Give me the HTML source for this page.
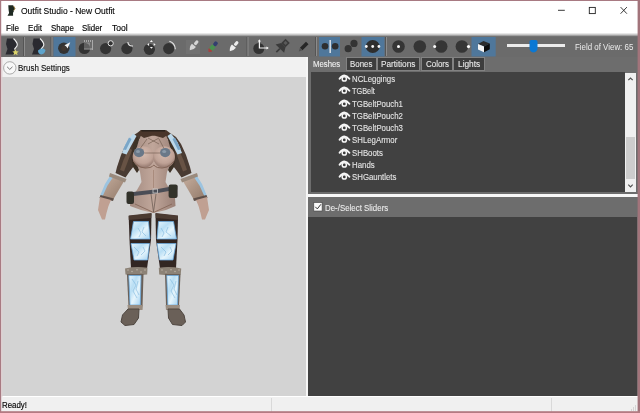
<!DOCTYPE html>
<html><head><meta charset="utf-8">
<style>
*{margin:0;padding:0;box-sizing:border-box}
html,body{width:640px;height:413px;overflow:hidden;background:#fff;font-family:"Liberation Sans",sans-serif;}
.a{position:absolute}
.t{position:absolute;white-space:nowrap;transform-origin:0 0}
#toolbar{left:1px;top:36px;width:637px;height:20.8px;background:#6b6b6b}
#left{left:1px;top:76.6px;width:304.5px;height:319.9px;background:#d3d3d3}
#lhead{left:1px;top:57.2px;width:307px;height:19.4px;background:#f1f1f1}
#split{left:305.5px;top:57px;width:2.7px;height:339px;background:#f6f6f6}
#right{left:308.2px;top:57px;width:329.8px;height:339px;background:#6d6d6d}
#mesh{left:310.5px;top:72px;width:314.5px;height:120px;background:#414141}
#sb{left:624.8px;top:72.6px;width:11.6px;height:119.4px;background:#f0f0f0}
#hsplit{left:308.2px;top:194.2px;width:329.8px;height:2.8px;background:#f8f8f8}
#shead{left:308.2px;top:197px;width:328px;height:19.5px;background:#6d6d6d}
#sarea{left:308.2px;top:216.5px;width:329px;height:179.5px;background:#414141}
#status{left:1px;top:396.5px;width:637px;height:15.5px;background:#f0f0f0}
.tab{position:absolute;top:57.3px;height:13.4px;background:#3d3d3d;border:1px solid #828282}
.m{font-size:9px;line-height:9px;color:#000;-webkit-text-stroke:0.15px #000}
.tb{font-size:8.5px;line-height:8.5px;color:#e8e8e8;-webkit-text-stroke:0.1px #e8e8e8}
.it{font-size:9.8px;line-height:9.8px;color:#e6e6e6;-webkit-text-stroke:0.1px #e6e6e6;transform:scaleX(0.8)}
#frame{left:0;top:0;width:640px;height:413px;border:1px solid #c08088;border-right-width:2px}
</style></head><body>
<div class="a" id="toolbar"></div>
<div class="a" id="left"></div>
<div class="a" id="lhead"></div>
<div class="a" id="split"></div>
<div class="a" id="right"></div>
<div class="tab" style="left:345.6px;width:31.2px"></div>
<div class="tab" style="left:377.2px;width:43px"></div>
<div class="tab" style="left:420.6px;width:32.2px"></div>
<div class="tab" style="left:453.2px;width:31.4px"></div>
<div class="a" id="mesh"></div>
<div class="a" id="sb"></div>
<div class="a" style="left:626.3px;top:137px;width:9px;height:42px;background:#cdcdcd"></div>
<div class="a" id="hsplit"></div>
<div class="a" id="shead"></div>
<div class="a" id="sarea"></div>
<div class="a" id="status"></div>
<div class="a" style="left:271px;top:398px;width:1px;height:14px;background:#d9d9d9"></div>
<div class="a" style="left:551px;top:398px;width:1px;height:14px;background:#d9d9d9"></div>

<!-- text -->
<div class="t" style="left:20.9px;top:6.1px;font-size:9.5px;line-height:9.5px;color:#000;-webkit-text-stroke:0.12px #000;transform:scaleX(0.892)">Outfit Studio - New Outfit</div>
<div class="t m" style="left:5.7px;top:23.9px;transform:scaleX(0.906)">File</div>
<div class="t m" style="left:27.6px;top:23.9px;transform:scaleX(0.898)">Edit</div>
<div class="t m" style="left:50.7px;top:23.9px;transform:scaleX(0.876)">Shape</div>
<div class="t m" style="left:82.3px;top:23.9px;transform:scaleX(0.876)">Slider</div>
<div class="t m" style="left:112.2px;top:23.9px;transform:scaleX(0.95)">Tool</div>
<div class="t" style="left:18.2px;top:62.5px;font-size:9.6px;line-height:9.6px;color:#111;-webkit-text-stroke:0.15px #111;transform:scaleX(0.831)">Brush Settings</div>
<div class="t tb" style="left:313.07px;top:59.9px;transform:scaleX(0.913);color:#f4f4f4">Meshes</div>
<div class="t tb" style="left:350.1px;top:59.9px;transform:scaleX(0.93)">Bones</div>
<div class="t tb" style="left:381.4px;top:59.9px;transform:scaleX(0.97)">Partitions</div>
<div class="t tb" style="left:425.7px;top:59.9px;transform:scaleX(0.935)">Colors</div>
<div class="t tb" style="left:458px;top:59.9px;transform:scaleX(0.98)">Lights</div>
<div class="t it" style="left:351.7px;top:74px">NCLeggings</div>
<div class="t it" style="left:351.7px;top:86px;transform:scaleX(0.75)">TGBelt</div>
<div class="t it" style="left:351.7px;top:99px">TGBeltPouch1</div>
<div class="t it" style="left:351.7px;top:111px">TGBeltPouch2</div>
<div class="t it" style="left:351.7px;top:123px">TGBeltPouch3</div>
<div class="t it" style="left:351.7px;top:135px">SHLegArmor</div>
<div class="t it" style="left:351.7px;top:148px">SHBoots</div>
<div class="t it" style="left:351.7px;top:160px">Hands</div>
<div class="t it" style="left:351.7px;top:172px">SHGauntlets</div>
<div class="t" style="left:324.6px;top:203.6px;font-size:9.3px;line-height:9.3px;color:#ececec;-webkit-text-stroke:0.1px #ececec;transform:scaleX(0.85)">De-/Select Sliders</div>
<div class="t" style="left:1.8px;top:401.1px;font-size:8.9px;line-height:8.9px;color:#000;-webkit-text-stroke:0.15px #000;transform:scaleX(0.887)">Ready!</div>
<div class="t" style="left:574.92px;top:42.9px;font-size:8.7px;line-height:8.7px;color:#ececec;transform:scaleX(0.91)">Field of View: 65</div>

<svg class="a" style="left:0;top:0" width="640" height="413" viewBox="0 0 640 413">
<defs>
<symbol id="eye" viewBox="0 0 12 8" overflow="visible">
</symbol>
</defs>
<!-- window controls -->
<path d="M558 10.3h6.8" stroke="#222" stroke-width="0.9"/>
<rect x="589.3" y="7.4" width="6" height="6.2" fill="none" stroke="#222" stroke-width="0.9"/>
<path d="M620.6 7.1l6.3 6.6M626.9 7.1l-6.3 6.6" stroke="#222" stroke-width="0.9"/>
<!-- title icon -->
<path d="M8.3 5.2h4.8l1.8 3.3l-1.3 2.2l0.2 1.2l-0.8 0.6l0.1 3.2h-5.6l1.6-2.6l-0.5-3.2z" fill="#1f2a22"/>
<path d="M13.6 6l1.4 2.6l-1.1 1.9" stroke="#a08040" stroke-width="0.9" fill="none"/>
<!-- menu bottom line -->
<defs><linearGradient id="tbg" x1="0" y1="0" x2="0" y2="1"><stop offset="0" stop-color="#f6f6f6"/><stop offset="0.5" stop-color="#c4c4c4"/><stop offset="1" stop-color="#7c7c7c"/></linearGradient></defs><rect x="1" y="33" width="637" height="3.4" fill="url(#tbg)"/>
<!-- toolbar separators -->
<g>
<rect x="23" y="37" width="1" height="19" fill="#555"/><rect x="24" y="37" width="1" height="19" fill="#8c8c8c"/>
<rect x="50.5" y="37" width="1" height="19" fill="#555"/><rect x="51.5" y="37" width="1" height="19" fill="#8c8c8c"/>
<rect x="246.5" y="37" width="1" height="19" fill="#555"/><rect x="247.5" y="37" width="1" height="19" fill="#8c8c8c"/>
<rect x="315" y="37" width="1" height="19" fill="#555"/><rect x="316" y="37" width="1" height="19" fill="#8c8c8c"/>
<rect x="385" y="37" width="1" height="19" fill="#555"/><rect x="386" y="37" width="1" height="19" fill="#8c8c8c"/>
</g>
<!-- selected buttons -->
<g fill="#4f779b">
<rect x="53.5" y="37" width="22" height="19.5"/>
<rect x="319" y="37" width="21" height="19.5"/>
<rect x="361.5" y="37" width="23" height="19.5"/>
<rect x="471.5" y="37" width="24.2" height="19.5"/>
</g>
<!-- icon 1 & 2: silhouettes -->
<path d="M7 38.5L13.5 38.5C15 40 17.5 43 17.5 45C17 47 15 48 14.5 49L14 52L14 54.5L5.5 54.5L7.5 49L6 44Z" fill="#2a2a30"/>
<path d="M13.5 38.5C15 40 17.5 43 17.3 45C17 47 15 48 14.5 49.5" stroke="#f2f2f2" stroke-width="1.1" fill="none"/>
<path d="M15.5 49.3l0.9 2l2.3 0.2l-1.7 1.5l0.6 2.2l-2.1-1.2l-2 1.2l0.6-2.2l-1.7-1.5l2.2-0.2z" fill="#dcd46a"/>
<path d="M33.5 38.5L40 38.5C41.5 40 44 43 44 45C43.5 47 41.5 48 41 49L40.5 52L40.5 54.5L32 54.5L34 49L32.5 44Z" fill="#2a2a30"/>
<path d="M40 38.5C41.5 40 44 43 43.8 45C43.5 47 41.5 48 41 49.5" stroke="#f2f2f2" stroke-width="1.1" fill="none"/>
<path d="M38 50.5Q42 47 45.5 50Q45 54 41 54.5Q38 54 38 50.5z" fill="#5ea4cc"/>
<!-- brush circles -->
<g fill="#333">
<circle cx="63.8" cy="48.2" r="5.7"/>
<circle cx="84.4" cy="48.4" r="5.7"/>
<circle cx="105.6" cy="48.6" r="5.6"/>
<circle cx="126.9" cy="48.6" r="5.6"/>
<circle cx="149.4" cy="49.3" r="5.6"/>
<circle cx="168.7" cy="48.6" r="5.6"/>
<circle cx="258.8" cy="48.5" r="5.5"/>
</g>
<circle cx="63.8" cy="48.5" r="2.5" fill="#4a3a30" opacity="0.6"/>
<path d="M64.5 45.3L70.3 42.2L67.5 48.5L66.3 46.5z" fill="#f6f6f6"/>
<g fill="#e8e8e8"><rect x="84" y="40.5" width="1" height="1"/><rect x="86" y="40.5" width="1" height="1"/><rect x="88" y="40.5" width="1" height="1"/><rect x="90" y="40.5" width="1" height="1"/><rect x="92" y="40.5" width="1" height="1"/><rect x="92" y="42.5" width="1" height="1"/><rect x="92" y="44.5" width="1" height="1"/><rect x="92" y="46.5" width="1" height="1"/><rect x="92" y="48.5" width="1" height="1"/><rect x="84" y="48.5" width="8" height="1" opacity="0.6"/><rect x="84" y="42.5" width="6" height="6" opacity="0.25"/></g>
<circle cx="110.7" cy="43.3" r="2.6" fill="#333" stroke="#e0e0e0" stroke-width="1"/>
<path d="M127.8 42.2Q128.5 46.5 133 46" stroke="#e8e8e8" stroke-width="1.1" fill="none"/>
<g fill="#f4f4f4"><path d="M151.4 40l1.5 1.9h-3z"/><path d="M151.4 48.8l1.5-1.9h-3z"/><path d="M147.2 44.5l1.9 1.5v-3z"/><path d="M155.6 44.5l-1.9 1.5v-3z"/></g>
<path d="M169.4 41.3Q175 43 175.3 49.3" stroke="#e8e8e8" stroke-width="1.1" fill="none"/>
<!-- brushes -->
<rect x="186" y="40" width="14" height="14" fill="#717171"/>
<g transform="translate(193,46.5) rotate(-50)"><path d="M-5 0Q-2 -3 1.5 -2.6L1.5 2.6Q-2 3 -5 0z" fill="#d6d6d6"/><rect x="2.5" y="-1.5" width="5" height="3" rx="1.2" fill="#d6d6d6"/></g>
<g transform="translate(212.8,47) rotate(-50)" opacity="0.85"><path d="M-6.5 0Q-5 -2.6 -3 -2.3L-3 2.3Q-5 2.6 -6.5 0z" fill="#b03a3a"/><rect x="-3.2" y="-2.3" width="5" height="4.6" fill="#45984c"/><rect x="1.8" y="-1.9" width="4.8" height="3.8" rx="1.5" fill="#2a3870"/></g>
<g transform="translate(233,47.3) rotate(-50)"><path d="M-5 0Q-2 -3 1.5 -2.6L1.5 2.6Q-2 3 -5 0z" fill="#ececec"/><rect x="2.5" y="-1.5" width="5" height="3" rx="1.2" fill="#ececec"/></g>
<!-- transform -->
<path d="M259.4 40v8h8" stroke="#f6f6f6" stroke-width="1.2" fill="none"/>
<path d="M257.9 41.5l1.5-2.3l1.5 2.3z M266.5 46.4l2.3 1.6l-2.3 1.6z" fill="#f6f6f6"/>
<!-- pin -->
<g transform="translate(282,46.5) rotate(45)">
<rect x="-3" y="-8" width="6" height="6" fill="#3a3a3a"/>
<rect x="-1.5" y="-6.5" width="3" height="3" fill="#5a5a5a"/>
<path d="M-6 3L6 3L3 -2L-3 -2z" fill="#3a3a3a"/>
<rect x="-0.8" y="3" width="1.6" height="5" fill="#3a3a3a"/>
</g>
<!-- pen -->
<g transform="translate(303,47.3) rotate(45)"><rect x="-1.8" y="-6" width="3.6" height="8.5" fill="#262626"/><path d="M-1.8 2.5L1.8 2.5L0 6z" fill="#505050"/></g>
<!-- mirror buttons -->
<circle cx="325" cy="46.3" r="3.3" fill="#2e2e2e"/>
<circle cx="335.2" cy="46.3" r="3.3" fill="#2e2e2e"/>
<rect x="329.5" y="40" width="1.3" height="13" fill="#f4f4f4"/>
<circle cx="348.2" cy="48.7" r="3.6" fill="#343434"/>
<circle cx="354" cy="43.4" r="3.6" fill="#343434"/>
<ellipse cx="372.7" cy="46.5" rx="7" ry="6.4" fill="#2e2e2e"/>
<g fill="#f6f6f6"><circle cx="366.3" cy="46.5" r="1.4"/><circle cx="372.7" cy="46.5" r="1.4"/><circle cx="378.9" cy="46.5" r="1.4"/></g>
<!-- render mode circles -->
<g fill="#353535"><circle cx="398.5" cy="46.5" r="6.3"/><circle cx="419.8" cy="46.5" r="6.3"/><circle cx="441.2" cy="46.5" r="6.3"/><circle cx="461.9" cy="46.5" r="6.3"/></g>
<g fill="#fafafa"><circle cx="398.5" cy="46.6" r="1.5"/><circle cx="434.7" cy="46.6" r="1.5"/><circle cx="468.5" cy="46.6" r="1.6"/></g>
<!-- cube -->
<path d="M478 44L483.5 41L489.8 43.5L484 46.5z" fill="#2c2c2c"/>
<path d="M478 44L484 46.5V52.2L478 49.6z" fill="#f4f4f4"/>
<path d="M484 46.5L489.8 43.5V49.2L484 52.2z" fill="#0e0e0e"/>
<!-- slider -->
<rect x="507" y="44" width="58" height="3" fill="#ececec"/>
<path d="M529.5 41.8Q529.5 40 531.3 40h4.4q1.8 0 1.8 1.8v6.5q0 3.6-4 4.2q-4-0.6-4-4.2z" fill="#0a78d4"/>
<!-- brush settings circle -->
<circle cx="9.8" cy="67.9" r="6.2" fill="#f8f8f8" stroke="#a0a0a0" stroke-width="0.9"/>
<path d="M7.1 66.8l2.7 2.6l2.7-2.6" stroke="#555" stroke-width="0.8" fill="none"/>
<!-- scrollbar arrows -->
<path d="M628.3 80.2l2.2-2.2l2.2 2.2" stroke="#505050" stroke-width="1.2" fill="none"/>
<path d="M628.3 184.6l2.2 2.2l2.2-2.2" stroke="#505050" stroke-width="1.2" fill="none"/>
<!-- checkbox -->
<rect x="313.8" y="202.6" width="8.3" height="8.4" fill="#fafafa" stroke="#444" stroke-width="0.6"/>
<path d="M315.3 206.8l2 2.1l3.6-4.6" stroke="#333" stroke-width="1" fill="none"/>
<!-- eyes -->
<g id="eyes" stroke="#f6f6f6" fill="none">
<path d="M339.6 78.75Q344.3 72.15 349.4 78.75" stroke-width="2" stroke-linecap="round"/><circle cx="344.3" cy="78.95" r="2.1" stroke-width="1.5" fill="#3a3a3a"/>
<path d="M339.6 90.75Q344.3 84.15 349.4 90.75" stroke-width="2" stroke-linecap="round"/><circle cx="344.3" cy="90.95" r="2.1" stroke-width="1.5" fill="#3a3a3a"/>
<path d="M339.6 103.75Q344.3 97.15 349.4 103.75" stroke-width="2" stroke-linecap="round"/><circle cx="344.3" cy="103.95" r="2.1" stroke-width="1.5" fill="#3a3a3a"/>
<path d="M339.6 115.75Q344.3 109.15 349.4 115.75" stroke-width="2" stroke-linecap="round"/><circle cx="344.3" cy="115.95" r="2.1" stroke-width="1.5" fill="#3a3a3a"/>
<path d="M339.6 127.75Q344.3 121.15 349.4 127.75" stroke-width="2" stroke-linecap="round"/><circle cx="344.3" cy="127.95" r="2.1" stroke-width="1.5" fill="#3a3a3a"/>
<path d="M339.6 139.75Q344.3 133.15 349.4 139.75" stroke-width="2" stroke-linecap="round"/><circle cx="344.3" cy="139.95" r="2.1" stroke-width="1.5" fill="#3a3a3a"/>
<path d="M339.6 152.75Q344.3 146.15 349.4 152.75" stroke-width="2" stroke-linecap="round"/><circle cx="344.3" cy="152.95" r="2.1" stroke-width="1.5" fill="#3a3a3a"/>
<path d="M339.6 164.75Q344.3 158.15 349.4 164.75" stroke-width="2" stroke-linecap="round"/><circle cx="344.3" cy="164.95" r="2.1" stroke-width="1.5" fill="#3a3a3a"/>
<path d="M339.6 176.75Q344.3 170.15 349.4 176.75" stroke-width="2" stroke-linecap="round"/><circle cx="344.3" cy="176.95" r="2.1" stroke-width="1.5" fill="#3a3a3a"/>
</g>
</svg>
<!--MODEL-->
<svg class="a" style="left:0;top:0" width="640" height="413" viewBox="0 0 640 413">
<defs>
<filter id="bl" x="-10%" y="-10%" width="120%" height="120%"><feGaussianBlur stdDeviation="0.55"/></filter>
<radialGradient id="br" cx="0.5" cy="0.35" r="0.68"><stop offset="0" stop-color="#d6bcb0"/><stop offset="0.65" stop-color="#bfa296"/><stop offset="1" stop-color="#8c7066"/></radialGradient>
<linearGradient id="sk" x1="0" y1="0" x2="1" y2="0"><stop offset="0" stop-color="#a28a80"/><stop offset="0.5" stop-color="#c0a69a"/><stop offset="1" stop-color="#9a8076"/></linearGradient>
<linearGradient id="ice" x1="0" y1="0" x2="1" y2="1"><stop offset="0" stop-color="#e8f6fd"/><stop offset="0.35" stop-color="#b8def4"/><stop offset="0.6" stop-color="#e6f5fc"/><stop offset="1" stop-color="#a4d2f0"/></linearGradient>
<linearGradient id="brc" x1="0" y1="0" x2="1" y2="1"><stop offset="0" stop-color="#c8b0a0"/><stop offset="1" stop-color="#927a6a"/></linearGradient>
</defs>
<g filter="url(#bl)">
<!-- upper arm sleeves / jacket -->
<path d="M141 130 L137 133 L131 137 L126 144 L121 155 L117 167 L115.5 173 L125.5 177.5 L130 171 L134 166 L133 150 L136 142 L144 136z" fill="#4a3a30"/>
<path d="M166 130 L170 133 L176 137 L181 144 L186 155 L190 167 L191.5 173 L181.5 177.5 L177 171 L173 166 L174 150 L171 142 L163 136z" fill="#4a3a30"/>
<path d="M129 148 L123.5 160 L120 170 L124 171.5 L128 161 L132 150z" fill="#6e5a4a" opacity="0.8"/>
<path d="M178 148 L183.5 160 L187 170 L183 171.5 L179 161 L175 150z" fill="#6e5a4a" opacity="0.8"/>
<!-- bracers -->
<path d="M111 174.5 L125 179.5 L113.5 199 L100.5 196z" fill="url(#brc)"/>
<path d="M111 174.5 L105 184 L100.2 195.5 L102.5 196.5 L107.5 185.5 L113.5 176.5z" fill="#9cc4e0"/>
<path d="M196 174.5 L182 179.5 L193.5 199 L206.5 196z" fill="url(#brc)"/>
<path d="M196 174.5 L202 184 L206.8 195.5 L204.5 196.5 L199.5 185.5 L193.5 176.5z" fill="#9cc4e0"/>
<path d="M110 173 L126.5 179 L125 182.5 L109 176.5z" fill="#9a8a7c"/>
<path d="M197 173 L180.5 179 L182 182.5 L198 176.5z" fill="#9a8a7c"/>
<path d="M100.5 195 L114 198.5 L113 201 L99.5 198z" fill="#5e5048"/>
<path d="M206.5 195 L193 198.5 L194 201 L207.5 198z" fill="#5e5048"/>
<!-- hands -->
<path d="M100 197 L111 200 L108.5 206 L106.5 213 L105 219.5 L102 219.5 L98 210z" fill="#c0a092"/>
<path d="M207 197 L196 200 L198.5 206 L200.5 213 L202 219.5 L205 219.5 L209 210z" fill="#c0a092"/>
<!-- torso -->
<path d="M142 133 L165 133 L170 145 L170 165 L167 172 L165.5 182 L170 190 L175 198 L175.5 206 L166 210 L153.5 213 L141 210 L130 206 L130.5 198 L137 190 L141.5 182 L140 172 L137 165 L137 145z" fill="url(#sk)"/>
<path d="M153.5 170 L153.5 188" stroke="#9c7c6c" stroke-width="1" opacity="0.6"/>
<!-- jacket front edges -->
<path d="M137 136 L133 145 L131.5 157 L133 167 L137 173 L139 170 L136 162 L136 150 L139 140z" fill="#3e3026"/>
<path d="M170 136 L174 145 L175.5 157 L174 167 L170 173 L168 170 L171 162 L171 150 L168 140z" fill="#3e3026"/>
<!-- breasts -->
<circle cx="143.4" cy="157" r="10.8" fill="url(#br)"/>
<circle cx="164.2" cy="157" r="10.8" fill="url(#br)"/>
<path d="M133.5 161 Q140 170 150 167.5 Q153 166.5 153.8 165 Q155 166.5 157.5 167.5 Q167 170 174 161" stroke="#86685a" stroke-width="1" fill="none"/>
<ellipse cx="139" cy="152.6" rx="5.2" ry="4.6" fill="#6a7888"/>
<ellipse cx="165.2" cy="152.6" rx="5.2" ry="4.6" fill="#6a7888"/>
<ellipse cx="138" cy="151.5" rx="2" ry="1.6" fill="#9aaab8" opacity="0.7"/>
<ellipse cx="164.2" cy="151.5" rx="2" ry="1.6" fill="#9aaab8" opacity="0.7"/>
<path d="M140.5 148 L147 139 M163.7 148 L159 139 M148 138 L159 144 M159 138 L148 144 M144.2 153 L160 153" stroke="#5a4638" stroke-width="0.5" fill="none"/>
<!-- collar -->
<path d="M141 130 L165.5 130 L169 134 L163 138 L155 135.8 L152 135.8 L144 138 L138 134z" fill="#483629"/>
<path d="M141.5 130.8 L165 130.8" stroke="#2c221c" stroke-width="1.5"/>
<!-- shoulder pads -->
<path d="M133 133.5 L136.5 136 L131 146 L126.5 154.5 L122 153 L126.5 142z" fill="#bcd8ea"/>
<path d="M129 137.5 L131.5 139 L126 150 L123 149.5z" fill="#7aa6c8"/>
<path d="M171 133.5 L167.5 136 L173 146 L177.5 154.5 L182 153 L177.5 142z" fill="#bcd8ea"/>
<path d="M175 137.5 L172.5 139 L178 150 L181 149.5z" fill="#7aa6c8"/>
<!-- belt -->
<path d="M128.9 192.5 L155 189.5 L177.3 185.5 L177.3 189.5 L155 193.5 L129 196.5z" fill="#4c4e56"/>
<rect x="153" y="189" width="4.5" height="4" fill="none" stroke="#c8c8c8" stroke-width="0.8"/>
<rect x="126.5" y="191.4" width="7.5" height="12.6" rx="2" fill="#33302c"/>
<rect x="168.6" y="184.6" width="9" height="13.5" rx="2" fill="#33302c"/>
<!-- hips/crotch -->
<path d="M135 204 L153.5 212.5 L172 204" stroke="#86685a" stroke-width="0.9" fill="none"/>
<path d="M151 194 L153.5 212 L156 194" stroke="#6e5e56" stroke-width="0.8" fill="none"/>
<!-- legs stockings -->
<path d="M128.7 216 L151.5 213.5 L151 240 L147 268.5 L131 268.5 L129.5 240z" fill="#322624"/>
<path d="M178 216 L155.5 213.5 L156 240 L160 268.5 L176 268.5 L177.5 240z" fill="#322624"/>
<path d="M128.7 215.5 L151.5 213 L151.2 218 L128.8 220z" fill="#4c3a32"/>
<path d="M178 215.5 L155.5 213 L155.8 218 L178 220z" fill="#4c3a32"/>
<!-- thigh ice panels -->
<path d="M133.5 221.5 L148.5 221.5 L150 239 L130.5 239z" fill="url(#ice)" stroke="#6aaade" stroke-width="1" stroke-opacity="0.75"/>
<path d="M131 243.5 L149.5 243.5 L147.5 260 L134 260z" fill="url(#ice)" stroke="#6aaade" stroke-width="1" stroke-opacity="0.75"/>
<path d="M158.5 221.5 L173.5 221.5 L176.5 239 L157 239z" fill="url(#ice)" stroke="#6aaade" stroke-width="1" stroke-opacity="0.75"/>
<path d="M157 243.5 L176 243.5 L173 260 L159.5 260z" fill="url(#ice)" stroke="#6aaade" stroke-width="1" stroke-opacity="0.75"/>
<g stroke="#7ab4dc" stroke-width="0.8" fill="none" opacity="0.7">
<path d="M138 228 L141 233 L139 237 M144 227 L142 232 L146 236 M134 247 L139 252 L137 256 M143 247 L145 251 L141 255"/>
<path d="M161 228 L164 233 L162 237 M168 227 L166 232 L171 236 M161 247 L166 252 L164 256 M170 247 L172 251 L168 255"/>
</g>
<!-- boot fur tops -->
<path d="M125 268.5 Q136 266 147.5 267.8 L147.2 274.5 Q136 276 125.5 274.5z" fill="#8c8276"/>
<path d="M158.8 267.8 Q170 266 181.2 268.5 L180.8 274.5 Q170 276 159.2 274.5z" fill="#8c8276"/>
<g fill="#d0c8bc" opacity="0.8"><circle cx="128" cy="270" r="0.7"/><circle cx="132" cy="271.5" r="0.7"/><circle cx="137" cy="269.8" r="0.7"/><circle cx="141" cy="272" r="0.7"/><circle cx="145" cy="270" r="0.7"/>
<circle cx="162" cy="270" r="0.7"/><circle cx="166" cy="272" r="0.7"/><circle cx="171" cy="269.8" r="0.7"/><circle cx="175" cy="271.5" r="0.7"/><circle cx="179" cy="270" r="0.7"/></g>
<!-- boot shafts -->
<path d="M126.9 274 L143.5 274 L142.5 306 L128.5 306z" fill="#6a6058"/>
<path d="M165 274 L180.5 274 L179 306 L166 306z" fill="#6a6058"/>
<path d="M128.8 275.5 L141 275.5 L140.3 305 L130 305z" fill="url(#ice)" stroke="#6aaade" stroke-width="1" stroke-opacity="0.75"/>
<path d="M166.8 275.5 L178.5 275.5 L177.5 305 L167.8 305z" fill="url(#ice)" stroke="#6aaade" stroke-width="1" stroke-opacity="0.75"/>
<g stroke="#7ab4dc" stroke-width="0.8" fill="none" opacity="0.7">
<path d="M132 279 L136 285 L133 291 L137 298 M138 281 L136 289 L139 295"/>
<path d="M170 279 L174 285 L171 291 L175 298 M176 281 L174 289 L177 295"/>
</g>
<path d="M127.5 305 L143 305 L142.5 310 L128 310z" fill="#9a8e82"/>
<path d="M165.5 305 L180 305 L179.5 310 L166 310z" fill="#9a8e82"/>
<!-- feet -->
<path d="M128 309 L139 309 L138.5 318 L134 324.5 L125 325.5 L121 322 L122.5 315z" fill="#6a6058" stroke="#4e4640" stroke-width="1"/>
<path d="M168 309 L179.5 309 L184 315 L185.5 322 L182 325.5 L172.5 324.5 L168.5 318z" fill="#6a6058" stroke="#4e4640" stroke-width="1"/>
</g>
</svg>
<!--/MODEL-->
<svg class="a" style="left:0;top:0" width="640" height="413" viewBox="0 0 640 413">
<rect x="0" y="0" width="640" height="1" fill="#a87a82"/>
<rect x="0" y="0" width="1.2" height="413" fill="#a87a82"/>
<rect x="1.2" y="57" width="1.2" height="340" fill="#e2d2d4"/>
<rect x="637.6" y="0" width="2.4" height="413" fill="#a2747b"/>
<rect x="0" y="411.2" width="640" height="1.8" fill="#b47a82"/>
<g fill="#b8b8b8"><rect x="635" y="405.5" width="1" height="1"/><rect x="633" y="407.5" width="1" height="1"/><rect x="635" y="407.5" width="1" height="1"/><rect x="631" y="409.5" width="1" height="1"/><rect x="633" y="409.5" width="1" height="1"/><rect x="635" y="409.5" width="1" height="1"/></g>
</svg>
</body></html>
